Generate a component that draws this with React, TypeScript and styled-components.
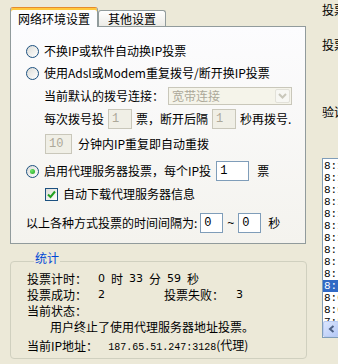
import React from "react";
import styled, { createGlobalStyle } from "styled-components";

const GlobalStyle = createGlobalStyle`
  html, body {
    margin: 0;
    padding: 0;
    overflow: hidden;
  }
  body {
    background: #ece9d8;
    font-family: "Noto Sans CJK SC", "Liberation Sans", sans-serif;
    font-size: 12px;
    color: #000;
  }
`;

const Window = styled.div`
  display: flex;
  width: 338px;
  height: 364px;
  overflow: hidden;
  background: #ece9d8;
`;

const LeftColumn = styled.div`
  display: flex;
  flex-direction: column;
  flex: none;
  width: 297px;
  margin-left: 10px;
  padding-top: 7px;
`;

// 标签页
const TabStrip = styled.div`
  display: flex;
  align-items: flex-end;
  height: 19px;
`;

const Tab = styled.div<{ $active?: boolean; $pad: number }>`
  box-sizing: border-box;
  position: relative;
  z-index: ${(p) => (p.$active ? 1 : 0)};
  display: flex;
  align-items: center;
  height: ${(p) => (p.$active ? 20 : 16)}px;
  margin-bottom: ${(p) => (p.$active ? -1 : 0)}px;
  padding: ${(p) => (p.$active ? "2px" : "0")} ${(p) => p.$pad}px 0;
  border: 1px solid #919b9c;
  border-bottom: none;
  border-top-color: ${(p) => (p.$active ? "#e68b2c" : "#919b9c")};
  border-radius: 3px 3px 0 0;
  box-shadow: ${(p) => (p.$active ? "inset 0 2px 0 #ffc83c" : "none")};
  background: ${(p) =>
    p.$active ? "#fcfcfe" : "linear-gradient(#ffffff, #ecebe6)"};
  white-space: nowrap;
  line-height: 14px;
`;

const Panel = styled.div`
  box-sizing: border-box;
  display: flex;
  flex-direction: column;
  width: 296px;
  height: 218px;
  padding: 15px 0 0 15px;
  border: 1px solid #919b9c;
  background: linear-gradient(#fcfcfe, #f4f3ee);
`;

const Row = styled.div<{ $h: number; $top?: number; $indent?: number }>`
  display: flex;
  align-items: center;
  height: ${(p) => p.$h}px;
  margin-top: ${(p) => p.$top ?? 0}px;
  padding-left: ${(p) => p.$indent ?? 0}px;
  white-space: nowrap;
  line-height: 14px;
`;

const Text = styled.span<{ $ml?: number; $w?: number }>`
  margin-left: ${(p) => p.$ml ?? 0}px;
  ${(p) => (p.$w ? `width: ${p.$w}px; flex: none;` : "")}
`;

const RadioCircle = styled.span<{ $checked?: boolean }>`
  box-sizing: border-box;
  display: flex;
  align-items: center;
  justify-content: center;
  flex: none;
  width: 13px;
  height: 13px;
  border: 1px solid #1c5180;
  border-radius: 50%;
  background: linear-gradient(135deg, #dcdcd7, #ffffff);

  &::after {
    content: "";
    display: ${(p) => (p.$checked ? "block" : "none")};
    width: 5px;
    height: 5px;
    border-radius: 50%;
    background: radial-gradient(circle at 35% 35%, #6ee86a, #21a121);
  }
`;

const CheckBox = styled.span`
  box-sizing: border-box;
  display: flex;
  align-items: center;
  justify-content: center;
  flex: none;
  width: 13px;
  height: 13px;
  border: 1px solid #1c5180;
  background: linear-gradient(135deg, #dcdcd7, #ffffff);
`;

const Field = styled.div<{ $w: number; $disabled?: boolean; $ml?: number }>`
  box-sizing: border-box;
  display: flex;
  align-items: center;
  flex: none;
  width: ${(p) => p.$w}px;
  height: 20px;
  margin-left: ${(p) => p.$ml ?? 0}px;
  padding-left: 3px;
  border: 1px solid ${(p) => (p.$disabled ? "#c9c7ba" : "#7f9db9")};
  background: ${(p) => (p.$disabled ? "#f0efe6" : "#ffffff")};
  color: ${(p) => (p.$disabled ? "#aca899" : "#000000")};
  font-family: "Liberation Mono", monospace;
  font-size: 12px;
`;

const Select = styled.div`
  box-sizing: border-box;
  display: flex;
  align-items: center;
  width: 124px;
  height: 18px;
  margin-left: 4px;
  padding: 0 1px 0 3px;
  border: 1px solid #c9c7ba;
  background: #f5f4ea;
  color: #aca899;
`;

const SelectButton = styled.span`
  box-sizing: border-box;
  display: flex;
  align-items: center;
  justify-content: center;
  width: 15px;
  height: 14px;
  margin-left: auto;
  border: 1px solid #e2e1d9;
  border-radius: 2px;
  background: #f7f7f3;
`;

const Tilde = styled.span`
  margin: 0 4px;
  font-family: "Liberation Sans", sans-serif;
`;

// 统计
const GroupBox = styled.fieldset`
  box-sizing: border-box;
  width: 297px;
  height: 105px;
  margin: 10px 0 0 0;
  padding: 0 0 0 16px;
  border: 1px solid #d0d0bf;
  border-radius: 4px;
  min-width: 0;
`;

const Legend = styled.legend`
  position: relative;
  top: -3px;
  margin-left: 7px;
  padding: 0 1px;
  color: #0046d5;
  line-height: 14px;
`;

const Num = styled.span<{ $ml?: number }>`
  margin-left: ${(p) => p.$ml ?? 0}px;
  font-family: "DejaVu Sans", sans-serif;
  font-size: 11px;
`;

const Mono = styled.span`
  font-family: "Liberation Mono", monospace;
  font-size: 10px;
`;

const TimeParts = styled.span`
  display: flex;
  align-items: center;
  gap: 6px;
  margin-left: 11px;
`;

// 右侧
const RightColumn = styled.div`
  display: flex;
  flex-direction: column;
  flex: none;
  width: 90px;
  margin-left: 15px;
`;

const RightLabel = styled.div<{ $top: number }>`
  height: 14px;
  margin-top: ${(p) => p.$top}px;
  line-height: 14px;
  white-space: nowrap;
`;

const ListBox = styled.div`
  box-sizing: border-box;
  display: flex;
  flex-direction: column;
  width: 90px;
  height: 180px;
  margin-top: 39px;
  border: 1px solid #7f9db9;
  background: #ffffff;
`;

const ListItems = styled.div`
  flex: 1;
  overflow: hidden;
  padding-top: 1px;
`;

const ListItem = styled.div<{ $selected?: boolean }>`
  height: 12px;
  padding-left: 1px;
  line-height: 12px;
  font-family: "Liberation Mono", monospace;
  font-size: 11px;
  white-space: nowrap;
  background: ${(p) => (p.$selected ? "#316ac5" : "transparent")};
  color: ${(p) => (p.$selected ? "#ffffff" : "#000000")};
`;

const HScroll = styled.div`
  display: flex;
  height: 16px;
  background: #f3f1ec;
`;

const ScrollButton = styled.span`
  box-sizing: border-box;
  display: flex;
  align-items: center;
  justify-content: center;
  width: 16px;
  height: 16px;
  border: 1px solid #b9cbf3;
  border-radius: 2px;
  background: linear-gradient(135deg, #dbe6fd, #b4c8f6);
`;

const logItems = [
  "8:12:30", "8:12:18", "8:12:05", "8:11:52", "8:11:40", "8:11:27", "8:11:15",
  "8: 9:58", "8: 9:46", "8: 9:33", "8: 9:20", "8:08:57", "8:08:44", "7:59:31",
];

export default function App() {
  return (
    <Window>
      <GlobalStyle />
      <LeftColumn>
        <TabStrip>
          <Tab $active $pad={7}>网络环境设置</Tab>
          <Tab $pad={9}>其他设置</Tab>
        </TabStrip>
        <Panel>
          <Row $h={18}>
            <RadioCircle />
            <Text $ml={5}>不换IP或软件自动换IP投票</Text>
          </Row>
          <Row $h={18} $top={4}>
            <RadioCircle />
            <Text $ml={5}>使用Adsl或Modem重复拨号/断开换IP投票</Text>
          </Row>
          <Row $h={20} $top={4} $indent={18}>
            <Text>当前默认的拨号连接：</Text>
            <Select>
              宽带连接
              <SelectButton>
                <svg width="9" height="6" viewBox="0 0 9 6">
                  <path d="M1 1 L4.5 4.5 L8 1" fill="none" stroke="#c9c7ba" strokeWidth="2" />
                </svg>
              </SelectButton>
            </Select>
          </Row>
          <Row $h={20} $top={3} $indent={18}>
            <Text>每次拨号投</Text>
            <Field $w={24} $disabled $ml={4}>1</Field>
            <Text $ml={4}>票，断开后隔</Text>
            <Field $w={24} $disabled $ml={4}>1</Field>
            <Text $ml={4}>秒再拨号.</Text>
          </Row>
          <Row $h={21} $top={4} $indent={19}>
            <Field $w={27} $disabled>10</Field>
            <Text $ml={6}>分钟内IP重复即自动重拨</Text>
          </Row>
          <Row $h={20} $top={7}>
            <RadioCircle $checked />
            <Text $ml={5}>启用代理服务器投票，每个IP投</Text>
            <Field $w={33} $ml={5}>1</Field>
            <Text $ml={8}>票</Text>
          </Row>
          <Row $h={16} $top={5} $indent={19}>
            <CheckBox>
              <svg width="9" height="9" viewBox="0 0 9 9">
                <path d="M1 4.5 L3.5 7 L8 1.5" fill="none" stroke="#21a121" strokeWidth="2" />
              </svg>
            </CheckBox>
            <Text $ml={5}>自动下载代理服务器信息</Text>
          </Row>
          <Row $h={21} $top={10}>
            <Text>以上各种方式投票的时间间隔为:</Text>
            <Field $w={23} $ml={3}>0</Field>
            <Tilde>~</Tilde>
            <Field $w={23}>0</Field>
            <Text $ml={7}>秒</Text>
          </Row>
        </Panel>

        <GroupBox>
          <Legend>统计</Legend>
          <Row $h={16} $top={3}>
            <Text>投票计时：</Text>
            <TimeParts>
              <Num>0</Num>
              <span>时</span>
              <Num>33</Num>
              <span>分</span>
              <Num>59</Num>
              <span>秒</span>
            </TimeParts>
          </Row>
          <Row $h={16}>
            <Text $w={71}>投票成功：</Text>
            <Num style={{ width: 66 }}>2</Num>
            <Text>投票失败：</Text>
            <Num $ml={12}>3</Num>
          </Row>
          <Row $h={16}>
            <Text>当前状态：</Text>
          </Row>
          <Row $h={16} $indent={23}>
            <Text>用户终止了使用代理服务器地址投票。</Text>
          </Row>
          <Row $h={16} $top={3}>
            <Text>当前IP地址：</Text>
            <Text $ml={10}>
              <Mono>187.65.51.247:3128</Mono>(代理)
            </Text>
          </Row>
        </GroupBox>
      </LeftColumn>

      <RightColumn>
        <RightLabel $top={3}>投票次数</RightLabel>
        <RightLabel $top={21}>投票网址</RightLabel>
        <RightLabel $top={53}>验证码</RightLabel>
        <ListBox>
          <ListItems>
            {logItems.map((t, i) => (
              <ListItem key={i} $selected={i === 10}>
                {t}
              </ListItem>
            ))}
          </ListItems>
          <HScroll>
            <ScrollButton>
              <svg width="7" height="8" viewBox="0 0 7 8">
                <path d="M5.5 1 L2 4 L5.5 7" fill="none" stroke="#4d6185" strokeWidth="2" />
              </svg>
            </ScrollButton>
          </HScroll>
        </ListBox>
      </RightColumn>
    </Window>
  );
}
